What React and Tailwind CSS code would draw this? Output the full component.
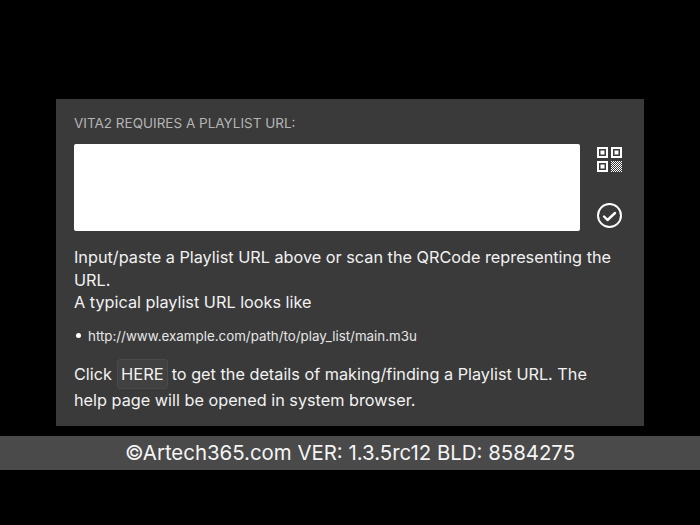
import React from 'react';

function QrIcon() {
  return (
    <svg width="25" height="25" viewBox="0 0 25 25" className="block">
      <defs>
        <pattern id="dither" width="2" height="2" patternUnits="userSpaceOnUse">
          <rect width="2" height="2" fill="#3a3a3a" />
          <rect width="1" height="1" fill="#ffffff" />
          <rect x="1" y="1" width="1" height="1" fill="#ffffff" />
        </pattern>
      </defs>
      <g fill="none" stroke="#ffffff" strokeWidth="2">
        <rect x="1" y="1" width="9" height="9" />
        <rect x="15" y="1" width="9" height="9" />
        <rect x="1" y="15" width="9" height="9" />
      </g>
      <g fill="#ffffff">
        <rect x="3.5" y="3.5" width="4" height="4" />
        <rect x="17.5" y="3.5" width="4" height="4" />
        <rect x="3.5" y="17.5" width="4" height="4" />
      </g>
      <rect x="14" y="14" width="11" height="11" fill="url(#dither)" />
    </svg>
  );
}

function CheckCircle() {
  return (
    <svg width="25" height="25" viewBox="0 0 25 25" fill="none" stroke="#ffffff" className="block">
      <circle cx="12.5" cy="12.5" r="11.5" strokeWidth="2" />
      <path d="M7 13.5l3.5 3.5 7.5-7" strokeWidth="2.4" strokeLinecap="round" strokeLinejoin="round" />
    </svg>
  );
}

export default function App() {
  return (
    <div className="h-[525px] w-[700px] overflow-hidden bg-black pt-[99px] font-['Inter',sans-serif] text-white">
      <div className="mx-[56px] h-[327px] bg-[#3a3a3a] px-[18px] pt-[16px]">
        <div className="text-[13.5px] leading-[17px] text-[#b4b4b4]">VITA2 REQUIRES A PLAYLIST URL:</div>

        <div className="mt-[12px] flex">
          <div className="h-[87px] w-[506px] rounded-[2px] bg-white" />
          <div className="ml-[17px] flex flex-col items-center">
            <div className="mt-[3px]">
              <QrIcon />
            </div>
            <div className="mt-[31px]">
              <CheckCircle />
            </div>
          </div>
        </div>

        <div className="mt-[15px] text-[16.25px] leading-[22.5px] text-[#f2f2f2]">
          <p>Input/paste a Playlist URL above or scan the QRCode representing the URL.</p>
          <p>A typical playlist URL looks like</p>
        </div>

        <ul className="mt-[12px] flex items-center text-[13.35px] leading-[20px] text-[#e6e6e6]">
          <li className="flex items-center">
            <span className="ml-[2px] mr-[7px] h-[5px] w-[5px] rounded-full bg-white" />
            http://www.example.com/path/to/play_list/main.m3u
          </li>
        </ul>

        <div className="mt-[15px] text-[16.25px] leading-[26px] text-[#f2f2f2]">
          Click
          <span className="-my-[2px] ml-[5px] mr-[4px] inline-block rounded-[3px] border border-[#4a4a4a] bg-[#414141] px-[3px] py-px text-[16.5px] leading-[26px]">HERE</span>
          to get the details of making/finding a Playlist URL. The
          <br />
          help page will be opened in system browser.
        </div>
      </div>

      <div className="mt-[10px] flex h-[34px] items-center justify-center bg-[#4a4a4a] text-[20.4px] text-[#f5f5f5]">
        ©Artech365.com VER: 1.3.5rc12 BLD: 8584275
      </div>
    </div>
  );
}
